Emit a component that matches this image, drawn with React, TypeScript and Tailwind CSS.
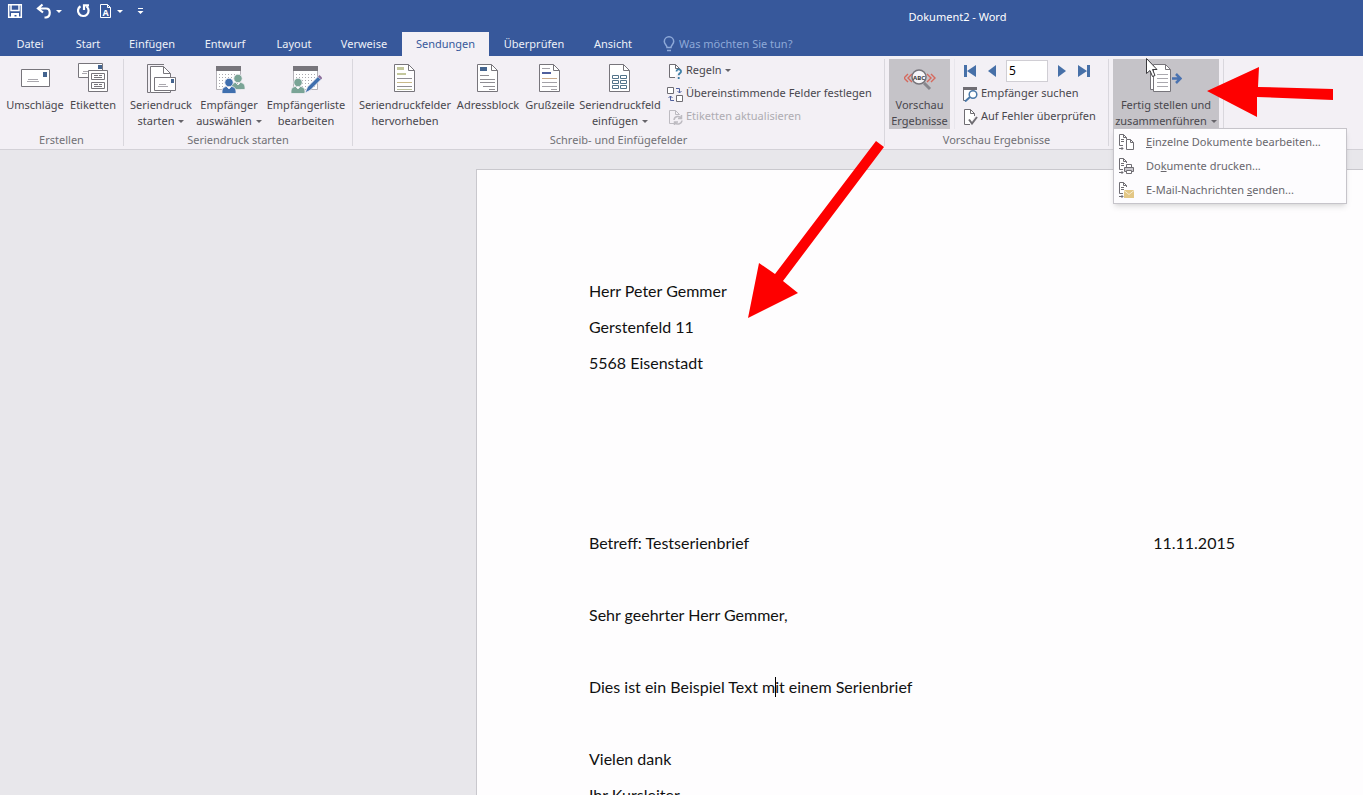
import { useState } from 'react';
import type { ReactNode } from 'react';
import clsx from 'clsx';

const TABS = [
  { name: 'Datei', width: 'w-[60px]' },
  { name: 'Start', width: 'w-14' },
  { name: 'Einfügen', width: 'w-[72px]' },
  { name: 'Entwurf', width: 'w-[74px]' },
  { name: 'Layout', width: 'w-16' },
  { name: 'Verweise', width: 'w-[76px]' },
  { name: 'Sendungen', width: 'w-[87px]' },
  { name: 'Überprüfen', width: 'w-[90px]' },
  { name: 'Ansicht', width: 'w-[68px]' },
];

function Caret({ className = 'text-[#66646a]' }: { className?: string }) {
  return (
    <svg width="6" height="3" viewBox="0 0 6 3" className={clsx('inline-block shrink-0', className)}>
      <path d="M0 0h6L3 3z" fill="currentColor" />
    </svg>
  );
}

function Large({ children }: { children: ReactNode }) {
  return (
    <svg width="32" height="32" viewBox="0 0 32 32" fill="none" stroke="#77757b" className="shrink-0">
      {children}
    </svg>
  );
}

function Small({ children }: { children: ReactNode }) {
  return (
    <svg width="16" height="16" viewBox="0 0 16 16" fill="none" stroke="#6f6d73" className="shrink-0">
      {children}
    </svg>
  );
}

function EnvelopeIcon() {
  return (
    <Large>
      <path d="M2.500 7.500h28v17h-28z" fill="#fff" />
      <path d="M24 10h4v5h-4z" fill="#44648f" stroke="none" />
      <path d="M9 17.500h10M8 19.500h12" stroke="#aaa8ae" />
    </Large>
  );
}

function LabelsIcon() {
  return (
    <Large>
      <path d="M1.500 1.500h24v14h-24z" fill="#fff" />
      <path d="M21 3h4v4h-4z" fill="#44648f" stroke="none" />
      <path d="M6 9.500h5M5 11.500h5" stroke="#aaa8ae" />
      <path d="M11.500 8.500h19v21h-19z" fill="#fff" />
      <path d="M14.500 11.500h13v6h-13zM14.500 20.500h13v6h-13z" />
      <path d="M17 13.500h4M22 13.500h3M17 15.500h8M17 22.500h4M22 22.500h3M17 24.500h8" />
    </Large>
  );
}

function MergeStartIcon() {
  return (
    <Large>
      <path d="M5 30.500H2.500v-28H19" />
      <path d="M5.500 30.500v-26h13l7 7v19z" fill="#fff" />
      <path d="M18.500 4.500v7h7" />
      <path d="M9.500 15.500h21v13h-21z" fill="#fff" />
      <path d="M26 17h3v4h-3z" fill="#44648f" stroke="none" />
      <path d="M14 22.500h7M13 24.500h10" stroke="#aaa8ae" />
    </Large>
  );
}

function Calendar() {
  return (
    <>
      <path d="M3.500 6.500h24v21h-24z" fill="#fff" stroke="#b3b1b7" />
      <path d="M3 4h25v5H3z" fill="#77757b" stroke="none" />
      <path d="M6 12.500h20M6 15.500h20M6 18.500h20M6 21.500h20M6 24.500h20" stroke="#aaa8ae" strokeDasharray="1 2" />
    </>
  );
}

function Person({ x, y, color }: { x: number; y: number; color: string }) {
  return (
    <g fill={color} stroke="#f3f0f5" strokeWidth="0.800" transform={`translate(${x} ${y})`}>
      <path d="M-7 12.500V10c0-3 2.500-4.500 4.500-4.500L0 8l2.500-2.500c2 0 4.500 1.500 4.500 4.500v2.500z" />
      <circle r="4.200" cy="1.500" />
    </g>
  );
}

function RecipientsIcon() {
  return (
    <Large>
      <Calendar />
      <Person x={25} y={15} color="#7aa496" />
      <Person x={16} y={19} color="#3f6fae" />
    </Large>
  );
}

function EditListIcon() {
  return (
    <Large>
      <Calendar />
      <Person x={8} y={19} color="#7aa496" />
      <path d="M15 31l2.500-6L28 14.500l3 3L20.500 28z" fill="#3f6fae" stroke="#f3f0f5" strokeWidth="0.800" />
      <path d="M28 14.500l1.500-1.500 3 3-1.500 1.500z" fill="#8a6d9b" stroke="none" />
    </Large>
  );
}

function PageShape() {
  return (
    <>
      <path d="M5.500 2.500h14l6 6v21h-20z" fill="#fff" />
      <path d="M19.500 2.500v6h6" />
    </>
  );
}

function HighlightIcon() {
  return (
    <Large>
      <PageShape />
      <path d="M8 5h7v3H8zM8 11h9v2H8z" fill="#c3c79c" stroke="none" />
      <path d="M8 16.500h15M8 24.500h15" stroke="#8f8d93" />
      <path d="M8 20.500h15" stroke="#c9b98a" />
      <path d="M8 27.500h15" stroke="#bcc19a" />
    </Large>
  );
}

function AddressIcon() {
  return (
    <Large>
      <PageShape />
      <path d="M8 5h7v4H8z" fill="#44648f" stroke="none" />
      <path d="M8 13.500h9M8 17.500h15M8 20.500h15M11 24.500h12M17 27.500h6" stroke="#8f8d93" />
    </Large>
  );
}

function GreetingIcon() {
  return (
    <Large>
      <PageShape />
      <path d="M8 6.500h8M8 20.500h15M8 24.500h15M17 27.500h6" stroke="#a3a1a7" />
      <path d="M8 10h9v2H8z" fill="#4f5f9d" stroke="none" />
      <path d="M8 16.500h15" stroke="#c9a98a" />
    </Large>
  );
}

function InsertFieldIcon() {
  return (
    <Large>
      <PageShape />
      <path d="M8.500 13.500h6v3h-6zM16.500 13.500h6v3h-6zM8.500 18.500h6v3h-6zM16.500 18.500h6v3h-6zM8.500 23.500h6v3h-6zM16.500 23.500h6v3h-6z" stroke="#52738a" />
    </Large>
  );
}

function PreviewIcon() {
  return (
    <Large>
      <path d="M4 12l-4 4 4 4M8 12l-4 4 4 4M23 12l4 4-4 4M27 12l4 4-4 4" stroke="#d6685c" strokeWidth="1.400" />
      <path d="M20 21l6 6" strokeWidth="3" stroke="#88868c" />
      <circle cx="15" cy="15" r="7" fill="#f6f5f8" strokeWidth="1.500" />
      <text x="15" y="17.500" textAnchor="middle" fontSize="6" fontWeight="700" fill="#3c3b40" stroke="none">ABC</text>
    </Large>
  );
}

function FinishIcon() {
  return (
    <Large>
      <path d="M3 27.500H.500v-22H4" fill="#fff" />
      <path d="M3.500 29.500v-27h12l5 5v22z" fill="#fff" />
      <path d="M15.500 2.500v5h5" />
      <path d="M7 12.500h11M7 16.500h11M7 20.500h11M7 24.500h11" stroke="#aaa8ae" />
      <path d="M22 16.500h8M26 12l4.500 4.500L26 21" stroke="#4a72b0" strokeWidth="2.500" />
    </Large>
  );
}

function RulesIcon() {
  return (
    <Small>
      <path d="M8 14.500H2.500v-13h6l4 4V7" fill="#fff" />
      <path d="M8.500 1.500v4h4" />
      <path d="M9.500 8.500c0-3 5-2.500 4.500.3-.2 1.500-2.300 1.500-2.300 3.400M11.700 14v2" stroke="#3d7fa6" strokeWidth="1.800" />
    </Small>
  );
}

function MatchIcon() {
  return (
    <Small>
      <path d="M.500 1.500h6v6h-6zM9.500 9.500h6v6h-6z" fill="#fff" />
      <path d="M9 2.500h3.500V7M10.500 5l2 2 2-2M7 14.500H3.500V10M1.500 12l2-2 2 2" stroke="#4f5f9d" />
    </Small>
  );
}

function RefreshIcon() {
  return (
    <Small>
      <g stroke="#bdbbc1">
        <path d="M7 14.500H2.500v-13h6l4 4" />
        <path d="M8.500 1.500v4h4" />
        <path d="M7 11c.5-4 5.500-4.500 7-2M14.500 6v3.500H11M15 11.500c-.5 4-5.500 4.500-7 2M7.500 16v-3H11" strokeWidth="1.500" />
      </g>
    </Small>
  );
}

function FindIcon() {
  return (
    <Small>
      <path d="M5 14.500H1.500v-13h13V4" fill="#fff" />
      <path d="M1 1h14v3H1z" fill="#6f6d73" stroke="none" />
      <path d="M8 11l-5 4.500" stroke="#4a78a8" strokeWidth="2" />
      <circle cx="11" cy="8.500" r="3.800" fill="#fff" stroke="#4a78a8" strokeWidth="1.500" />
    </Small>
  );
}

function CheckIcon() {
  return (
    <Small>
      <path d="M8 15.500H2.500V.500h6l4 4V7" fill="#fff" />
      <path d="M8.500.500v4h4" />
      <path d="M7 10.500l3 4 5-6.500" strokeWidth="2" />
    </Small>
  );
}

// Shared part of the three menu icons: written sheet with a small arrow under it
function MenuSheet() {
  return (
    <>
      <path d="M5 11.500H1.500V.500h4l3 3V5" fill="#fff" />
      <path d="M5.500.500v3h3M3 5.500h3M3 7.500h3" />
      <path d="M1 14.500h4M3.500 13l1.500 1.500L3.500 16" />
    </>
  );
}

function MenuEditIcon() {
  return (
    <Small>
      <MenuSheet />
      <path d="M8.500 5.500h4l3 3v7h-7z" fill="#fff" />
      <path d="M12.500 5.500v3h3" />
    </Small>
  );
}

function MenuPrintIcon() {
  return (
    <Small>
      <MenuSheet />
      <path d="M8.500 6.500h5v3h-5z" fill="#fff" />
      <path d="M6.500 9.500h9v4h-9z" fill="#c9c7cd" />
      <path d="M8.500 12.500h5v3h-5z" fill="#fff" />
    </Small>
  );
}

function MenuMailIcon() {
  return (
    <Small>
      <MenuSheet />
      <path d="M6 8h10v8H6z" fill="#e3c785" stroke="none" />
      <path d="M6 8.500l5 4 5-4" stroke="#f7ecd0" />
    </Small>
  );
}

function BigButton({ icon, lines, width, menu, active, disabled }: {
  icon: ReactNode;
  lines: string[];
  width: string;
  menu?: boolean;
  active?: boolean;
  disabled?: boolean;
}) {
  return (
    <button
      disabled={disabled}
      className={clsx(
        'flex h-[70px] flex-col items-center whitespace-nowrap pt-[3px] leading-4',
        width,
        active ? 'bg-[#c5c3c8]' : 'hover:bg-[#dddbe1]'
      )}
    >
      {icon}
      <span className="mt-[3px]">{lines[0]}</span>
      {lines[1] && (
        <span className="flex items-center gap-1">
          {lines[1]}
          {menu && <Caret />}
        </span>
      )}
    </button>
  );
}

function RowButton({ icon, label, menu, disabled }: {
  icon: ReactNode;
  label: string;
  menu?: boolean;
  disabled?: boolean;
}) {
  return (
    <button
      disabled={disabled}
      className={clsx(
        'flex h-[23px] items-center gap-[3px] whitespace-nowrap',
        disabled ? 'text-[#aeacb2]' : 'hover:bg-[#dddbe1]'
      )}
    >
      {icon}
      {label}
      {menu && <Caret />}
    </button>
  );
}

function Group({ title, width, children }: { title: string; width: string; children: ReactNode }) {
  return (
    <section className={clsx('my-[3px] flex shrink-0 flex-col border-r border-[#d9d7dd]', width)}>
      <div className="flex h-[70px]">{children}</div>
      <h2 className="mt-[3px] text-center leading-4 text-[#717075]">{title}</h2>
    </section>
  );
}

function NavButton({ label, path }: { label: string; path: string }) {
  return (
    <button aria-label={label} className="flex h-[23px] w-4 items-center justify-center">
      <svg width="14" height="12" viewBox="0 0 14 12">
        <path d={path} fill="#4770a8" />
      </svg>
    </button>
  );
}

function QuickAccess() {
  return (
    <div className="flex h-[22px] items-center pl-[7px] text-white">
      <button aria-label="Speichern">
        <svg width="16" height="16" viewBox="0 0 16 16" fill="none" stroke="currentColor" strokeWidth="1.500">
          <path d="M1.700 1.700h12.600v12.600H1.700z" />
          <path d="M4 2v5.500h8V2" />
          <path d="M4 10h8v4.500H9.500V12h-2v2.500H4z" fill="currentColor" stroke="none" />
        </svg>
      </button>
      <button aria-label="Rückgängig" className="ml-[13px]">
        <svg width="16" height="16" viewBox="0 0 16 16" fill="none" stroke="currentColor" strokeWidth="2.200">
          <path d="M6.500 1.500L2 5.500l5 4M2.500 5.500H10c5 0 5 8 0 9H8.500" />
        </svg>
      </button>
      <button aria-label="Rückgängig-Liste" className="ml-1 flex h-4 items-center">
        <Caret className="text-white" />
      </button>
      <button aria-label="Wiederholen" className="ml-[13px]">
        <svg width="16" height="16" viewBox="0 0 16 16" fill="none" stroke="currentColor" strokeWidth="2.200">
          <path d="M5.500 3.200a5.300 5.300 0 1 0 6 .3M9 7V2.300h5" />
        </svg>
      </button>
      <button aria-label="Formatvorlage" className="ml-2">
        <svg width="14" height="16" viewBox="0 0 14 16" fill="none" stroke="currentColor">
          <path d="M1.500 1.500h7l3 3v10h-10z" />
          <path d="M8.500 1.500v3h3" />
          <text x="6.500" y="12.500" textAnchor="middle" fontSize="9" fontWeight="700" fill="currentColor" stroke="none">A</text>
        </svg>
      </button>
      <button aria-label="Formatvorlagen-Liste" className="ml-1 flex h-4 items-center">
        <Caret className="text-white" />
      </button>
      <button aria-label="Symbolleiste anpassen" className="ml-[14px]">
        <svg width="7" height="7" viewBox="0 0 7 7" fill="currentColor">
          <path d="M1 0h5v1H1zM.500 3h6l-3 3z" />
        </svg>
      </button>
    </div>
  );
}

function TitleBar() {
  return (
    <div className="flex h-8 items-start">
      <QuickAccess />
      <h1 className="flex-1 pl-[408px] pt-2 text-center leading-[18px] text-white">Dokument2 - Word</h1>
    </div>
  );
}

function TabBar({ tab, onSelect }: { tab: string; onSelect: (name: string) => void }) {
  return (
    <nav className="flex h-6 items-stretch">
      {TABS.map(({ name, width }) => (
        <button
          key={name}
          onClick={() => onSelect(name)}
          className={clsx(
            'shrink-0 text-center',
            width,
            tab === name ? 'bg-[#f3f0f5] text-[#37589b]' : 'text-[#eef1f8]'
          )}
        >
          {name}
        </button>
      ))}
      <label className="ml-4 flex flex-1 items-center gap-1 text-[#8ea9d8]">
        <svg width="12" height="16" viewBox="0 0 12 16" fill="none" stroke="currentColor" strokeWidth="1.500">
          <path d="M4 11.500c0-2.500-2.700-3-2.700-6a4.700 4.700 0 0 1 9.400 0c0 3-2.700 3.500-2.700 6zM4 14.500h4" />
        </svg>
        <input
          type="text"
          aria-label="Was möchten Sie tun?"
          placeholder="Was möchten Sie tun?"
          className="w-40 bg-transparent outline-none placeholder:text-[#8ea9d8]"
        />
      </label>
    </nav>
  );
}

function MenuItem({ icon, children }: { icon: ReactNode; children: ReactNode }) {
  return (
    <button role="menuitem" className="flex h-6 w-full items-center gap-3 pl-1 text-left hover:bg-[#e6e4ea]">
      {icon}
      <span>{children}</span>
    </button>
  );
}

function FinishMenu() {
  return (
    <div
      role="menu"
      className="absolute left-0 top-[69px] z-10 w-[234px] border border-[#c6c4ca] bg-[#fdfcfe] py-px text-[#69676d] shadow-md"
    >
      <MenuItem icon={<MenuEditIcon />}><u>E</u>inzelne Dokumente bearbeiten...</MenuItem>
      <MenuItem icon={<MenuPrintIcon />}>Do<u>k</u>umente drucken...</MenuItem>
      <MenuItem icon={<MenuMailIcon />}>E-Mail-Nachrichten <u>s</u>enden...</MenuItem>
    </div>
  );
}

function Ribbon() {
  const [record, setRecord] = useState('5');

  return (
    <div className="flex h-[94px] border-b border-[#d3d1d7] bg-[#f3f0f5] text-[#49474d]">
      <Group title="Erstellen" width="w-[124px]">
        <BigButton icon={<EnvelopeIcon />} lines={['Umschläge']} width="ml-[3px] w-16" />
        <BigButton icon={<LabelsIcon />} lines={['Etiketten']} width="w-[52px]" />
      </Group>

      <Group title="Seriendruck starten" width="w-[229px]">
        <BigButton icon={<MergeStartIcon />} lines={['Seriendruck', 'starten']} width="ml-[3px] w-[68px]" menu />
        <BigButton icon={<RecipientsIcon />} lines={['Empfänger', 'auswählen']} width="w-[68px]" menu />
        <BigButton icon={<EditListIcon />} lines={['Empfängerliste', 'bearbeiten']} width="w-[86px]" />
      </Group>

      <Group title="Schreib- und Einfügefelder" width="w-[532px]">
        <BigButton icon={<HighlightIcon />} lines={['Seriendruckfelder', 'hervorheben']} width="ml-1 w-24" />
        <BigButton icon={<AddressIcon />} lines={['Adressblock']} width="w-[70px]" />
        <BigButton icon={<GreetingIcon />} lines={['Grußzeile']} width="w-[54px]" />
        <BigButton icon={<InsertFieldIcon />} lines={['Seriendruckfeld', 'einfügen']} width="w-[86px]" menu />
        <div className="ml-1 flex flex-col items-start">
          <RowButton icon={<RulesIcon />} label="Regeln" menu />
          <RowButton icon={<MatchIcon />} label="Übereinstimmende Felder festlegen" />
          <RowButton icon={<RefreshIcon />} label="Etiketten aktualisieren" disabled />
        </div>
      </Group>

      <Group title="Vorschau Ergebnisse" width="w-[224px]">
        <BigButton icon={<PreviewIcon />} lines={['Vorschau', 'Ergebnisse']} width="ml-1 w-[61px]" active />
        <div className="ml-1 flex flex-col items-start border-l border-[#e8e6ec] pl-[7px]">
          <div className="flex h-[23px] items-center">
            <NavButton label="Erster Datensatz" path="M1 0h3v12H1zM13 0v12L4 6z" />
            <div className="ml-1.5 flex">
              <NavButton label="Vorheriger Datensatz" path="M11 0v12L3 6z" />
            </div>
            <input
              type="text"
              aria-label="Datensatz"
              value={record}
              onChange={(e) => setRecord(e.target.value)}
              className="ml-1.5 h-[22px] w-[42px] border border-[#d0ced4] bg-white px-0.5 text-[12px] text-black outline-none"
            />
            <div className="ml-1.5 flex gap-1.5">
              <NavButton label="Nächster Datensatz" path="M3 0v12l8-6z" />
              <NavButton label="Letzter Datensatz" path="M1 0v12l9-6zM10 0h3v12h-3z" />
            </div>
          </div>
          <RowButton icon={<FindIcon />} label="Empfänger suchen" />
          <RowButton icon={<CheckIcon />} label="Auf Fehler überprüfen" />
        </div>
      </Group>

      <section className="my-[3px] flex w-[115px] shrink-0 border-r border-[#d9d7dd] pl-1">
        <div className="relative h-[70px]">
          <BigButton icon={<FinishIcon />} lines={['Fertig stellen und', 'zusammenführen']} width="w-[106px]" menu active />
          <FinishMenu />
        </div>
      </section>
    </div>
  );
}

function Letter() {
  return (
    <article className="ml-[476px] border-l border-t border-[#c9c8cd] bg-[#fefdfe] pl-28 pr-32 pt-[103px] font-['Lato',sans-serif] text-[16px] leading-9 text-[#111]">
      <p>Herr Peter Gemmer</p>
      <p>Gerstenfeld 11</p>
      <p>5568 Eisenstadt</p>
      <p className="mt-36 flex justify-between">
        <span>Betreff: Testserienbrief</span>
        <time>11.11.2015</time>
      </p>
      <p className="mt-9">Sehr geehrter Herr Gemmer,</p>
      <p className="mt-9">
        Dies ist ein Beispiel Text m
        <span className="relative">
          <span className="absolute left-0 top-0 h-5 w-px bg-black" />
        </span>
        it einem Serienbrief
      </p>
      <p className="mt-9">Vielen dank</p>
      <p>Ihr Kursleiter</p>
    </article>
  );
}

// Red pointers and the mouse cursor, drawn over the window
function Annotations() {
  return (
    <svg width="1363" height="330" viewBox="0 0 1363 330" className="pointer-events-none absolute left-0 top-0 z-20">
      <path d="M876 141l8 6-101 134 15 12-50 25 11-55 16 11z" fill="#fe0000" />
      <path d="M1207 91l52-24-1 20 75 2v11l-76-3v20z" fill="#fe0000" />
      <path d="M1146.500 58.500v15l3.500-3 2.500 6 2.500-1-2.500-6h4.500z" fill="#fff" stroke="#3a393d" />
    </svg>
  );
}

function App() {
  const [tab, setTab] = useState('Sendungen');

  return (
    <div className="relative flex h-screen flex-col overflow-hidden bg-[#e8e7eb] font-['Noto_Sans',sans-serif] text-[11px]">
      <header className="shrink-0 bg-[#37589b]">
        <TitleBar />
        <TabBar tab={tab} onSelect={setTab} />
        <Ribbon />
      </header>
      <main className="min-h-0 flex-1 overflow-hidden pt-[19px]">
        <Letter />
      </main>
      <Annotations />
    </div>
  );
}

export default App;
